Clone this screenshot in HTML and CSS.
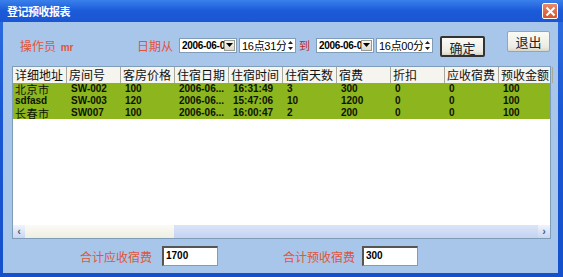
FILE: index.html
```html
<!DOCTYPE html>
<html lang="zh">
<head>
  <meta charset="UTF-8">
  <title>登记预收报表</title>
  <link rel="stylesheet" href="styles.css">
</head>
<body>

<div class="window">
  <div class="titlebar">
    <span class="title">登记预收报表</span>
    <span class="close">
      <svg width="11" height="11" viewBox="0 0 11 11"><path d="M1.5 1.5 L9.5 9.5 M9.5 1.5 L1.5 9.5" stroke="#fff" stroke-width="2"/></svg>
    </span>
  </div>

  <div class="client">
    <div class="toolbar">
      <span class="label op">操作员 <b>mr</b></span>
      <span class="label from">日期从</span>
      <span class="date"><span class="val">2006-06-0</span><span class="drop"><svg width="7" height="4" viewBox="0 0 7 4"><path d="M0 0 H7 L3.5 4 Z" fill="#000"/></svg></span></span>
      <span class="time"><span class="val">16点31分</span><span class="spin"><svg width="7" height="11" viewBox="0 0 7 11"><path d="M3.5 1 L6 4 H1 Z M1 7 H6 L3.5 10 Z" fill="#222"/></svg></span></span>
      <span class="to">到</span>
      <span class="date"><span class="val">2006-06-0</span><span class="drop"><svg width="7" height="4" viewBox="0 0 7 4"><path d="M0 0 H7 L3.5 4 Z" fill="#000"/></svg></span></span>
      <span class="time"><span class="val">16点00分</span><span class="spin"><svg width="7" height="11" viewBox="0 0 7 11"><path d="M3.5 1 L6 4 H1 Z M1 7 H6 L3.5 10 Z" fill="#222"/></svg></span></span>
      <button class="btn ok">确定</button>
      <button class="btn quit">退出</button>
    </div>

    <div class="grid">
      <div class="row head">
        <span>详细地址</span><span>房间号</span><span>客房价格</span><span>住宿日期</span><span>住宿时间</span>
        <span>住宿天数</span><span>宿费</span><span>折扣</span><span>应收宿费</span><span>预收金额</span>
      </div>
      <div class="row data">
        <span class="cn">北京市</span><span>SW-002</span><span>100</span><span>2006-06...</span><span>16:31:49</span>
        <span>3</span><span>300</span><span>0</span><span>0</span><span>100</span>
      </div>
      <div class="row data">
        <span>sdfasd</span><span>SW-003</span><span>120</span><span>2006-06...</span><span>15:47:06</span>
        <span>10</span><span>1200</span><span>0</span><span>0</span><span>100</span>
      </div>
      <div class="row data">
        <span class="cn">长春市</span><span>SW007</span><span>100</span><span>2006-06...</span><span>16:00:47</span>
        <span>2</span><span>200</span><span>0</span><span>0</span><span>100</span>
      </div>
      <div class="empty"></div>
      <div class="hscroll">
        <span class="arrow">‹</span>
        <span class="thumb"></span>
        <span class="track"></span>
        <span class="arrow">›</span>
      </div>
    </div>

    <div class="totals">
      <span class="label sum1">合计应收宿费</span>
      <span class="field">1700</span>
      <span class="label sum2">合计预收宿费</span>
      <span class="field">300</span>
    </div>
  </div>
</div>

</body>
</html>
```

FILE: styles.css
```css
body {
  margin: 0;
  padding: 0;
  font-family: 'Liberation Sans', 'Noto Sans CJK SC', sans-serif;
  background: #fff;
}
.window {
  width: 563px;
  height: 277px;
  background: linear-gradient(#2f6fe0, #1a57d4 40%, #1550cc);
  display: flex;
  flex-direction: column;
  box-sizing: border-box;
  padding: 0 5px 4px 3px;
}
.titlebar {
  height: 22px;
  display: flex;
  align-items: center;
  justify-content: space-between;
  background: linear-gradient(#3a80ec, #1b5ad8 50%, #1a56d2);
  margin: 0 -5px 0 -3px;
  padding: 0 5px 0 7px;
}
.title {
  color: #fff;
  font: bold 11px 'Noto Sans CJK SC', sans-serif;
  letter-spacing: -0.5px;
}
.close {
  width: 16px;
  height: 16px;
  border: 1px solid #fff;
  border-radius: 2px;
  background: linear-gradient(#e88a6a, #d9532a);
  display: flex;
  align-items: center;
  justify-content: center;
  box-sizing: border-box;
}
.client {
  flex: 1;
  background: #a7c6ea;
  display: flex;
  flex-direction: column;
  padding: 0 6px 0 9px;
}
.toolbar {
  height: 44px;
  display: flex;
  align-items: center;
  padding-top: 2px;
  box-sizing: border-box;
}
.label {
  color: #e0553a;
  font: 12px 'Noto Sans CJK SC', sans-serif;
}
.label b {
  font: bold 10px 'Liberation Sans', sans-serif;
  margin-left: 2px;
}
.op {
  margin-left: 8px;
  width: 117px;
}
.from {
  width: 42px;
}
.date, .time {
  height: 15px;
  background: #fff;
  border: 1px solid #7f9db9;
  box-sizing: border-box;
  display: flex;
  align-items: center;
  font: bold 10px 'Liberation Sans', 'Noto Sans CJK SC', sans-serif;
  color: #000;
}
.date {
  width: 58px;
  margin-right: 2px;
}
.time {
  width: 57px;
  font-weight: normal;
  font-size: 11px;
}
.val {
  flex: 1;
  padding-left: 2px;
  overflow: hidden;
  white-space: nowrap;
  letter-spacing: -0.3px;
}
.drop {
  width: 11px;
  height: 11px;
  flex: none;
  margin-right: 1px;
  background: linear-gradient(#f6f6f0, #dcdad0);
  border: 1px solid #9a9a90;
  box-sizing: border-box;
  display: flex;
  align-items: center;
  justify-content: center;
}
.spin {
  width: 9px;
  flex: none;
  display: flex;
  align-items: center;
  justify-content: center;
}
.to {
  color: #c02828;
  font: 11px 'Noto Sans CJK SC', sans-serif;
  margin: 0 6px 0 3px;
}
.btn {
  height: 21px;
  padding: 0;
  border: 1px solid #4a4a4a;
  border-radius: 2px;
  background: linear-gradient(#fbfbf6, #ecebe3 80%, #d8d5c8);
  font: 13px 'Noto Sans CJK SC', sans-serif;
  color: #222;
}
.ok {
  width: 45px;
  margin-left: 7px;
  margin-top: 2px;
  border-width: 2px;
  border-color: #333;
}
.quit {
  width: 43px;
  margin-left: auto;
  align-self: flex-start;
  margin-top: 7px;
  margin-right: 2px;
  border-color: #9aa4b0;
}
.grid {
  width: 539px;
  height: 173px;
  background: #fff;
  border: 1px solid #7f9db9;
  box-sizing: border-box;
  display: flex;
  flex-direction: column;
}
.row {
  display: grid;
  grid-template-columns: repeat(10, 54px);
}
.row span {
  white-space: nowrap;
  overflow: hidden;
  padding-left: 2px;
}
.head {
  height: 16px;
  background: #f5f4ee;
  font: 12px/16px 'Noto Sans CJK SC', sans-serif;
  color: #111;
}
.head span {
  border-right: 1px solid #a8a89c;
}
.data {
  height: 12px;
  background: #8db51e;
  font: bold 10px/12px 'Liberation Sans', sans-serif;
  color: #0c1400;
}
.data span {
  padding-left: 4px;
}
.data span:first-child {
  padding-left: 2px;
}
.data .cn {
  font: 11px/12px 'Noto Sans CJK SC', sans-serif;
  letter-spacing: 0.5px;
}
.empty {
  flex: 1;
}
.hscroll {
  height: 13px;
  display: flex;
  background: #eef1f8;
}
.arrow {
  width: 12px;
  background: linear-gradient(#f0f4fc, #c8d6f2);
  color: #4d6185;
  font: bold 11px/12px 'Liberation Sans', sans-serif;
  text-align: center;
}
.thumb {
  width: 149px;
  background: linear-gradient(#fbfbf6, #eeeee2);
}
.track {
  flex: 1;
  background: linear-gradient(#dbe4f8, #c4d3f2);
}
.totals {
  flex: 1;
  display: flex;
  align-items: center;
}
.sum1 {
  margin-left: 68px;
  width: 82px;
}
.sum2 {
  margin-left: 65px;
  width: 79px;
}
.field {
  width: 56px;
  height: 20px;
  background: #fff;
  border: 1px solid #7f9db9;
  border-left: 2px solid #555;
  border-top: 2px solid #555;
  box-sizing: border-box;
  font: bold 10px/16px 'Liberation Sans', sans-serif;
  padding-left: 2px;
}
```
